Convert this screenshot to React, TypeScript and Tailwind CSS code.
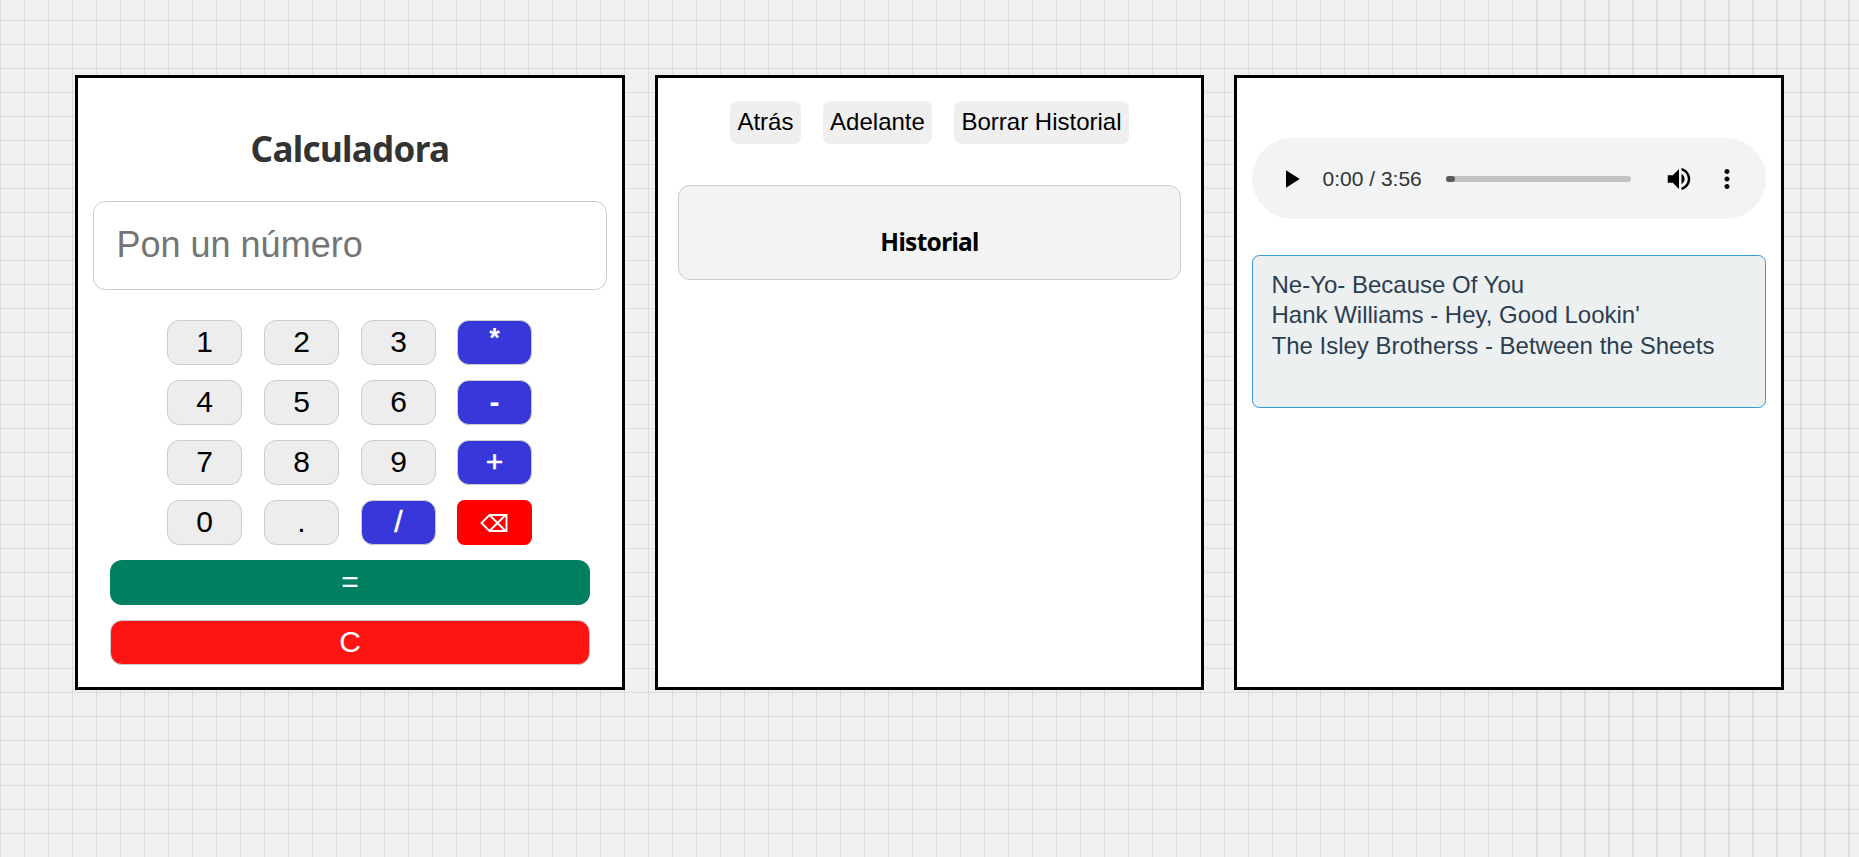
import type { ReactNode } from 'react';

const Card = ({ width, children }: { width: string; children: ReactNode }) => (
  <section className={`h-[615px] shrink-0 border-[3px] border-black bg-white px-[15px] ${width}`}>{children}</section>
);

const digit = 'bg-[#ededed] pb-[2px] border-[#ccc] text-[30px] text-black';
const operator = 'bg-[#3837da] pb-[2px] border-[#ccc] text-[30px] text-white [-webkit-text-stroke:0.5px_white]';
const minus = 'bg-[#3837da] pb-[2px] border-[#ccc] text-[30px] text-white font-bold';
const times = 'bg-[#3837da] pb-[9px] border-[#ccc] text-[27px] text-white font-bold';

const keys: { label: string; style: string }[] = [
  { label: '1', style: digit },
  { label: '2', style: digit },
  { label: '3', style: digit },
  { label: '*', style: times },
  { label: '4', style: digit },
  { label: '5', style: digit },
  { label: '6', style: digit },
  { label: '-', style: minus },
  { label: '7', style: digit },
  { label: '8', style: digit },
  { label: '9', style: digit },
  { label: '+', style: operator },
  { label: '0', style: digit },
  { label: '.', style: digit },
  { label: '/', style: operator },
];

function Calculator() {
  return (
    <Card width="w-[550px]">
      <h1 className="mt-[46px] text-center font-['Noto_Sans',sans-serif] text-[35px] leading-[50px] font-bold tracking-[-0.65px] text-[#333]">
        Calculadora
      </h1>
      <input
        className="mt-[27px] block h-[89px] w-full rounded-[12px] border border-[#ccc] bg-white px-[22.5px] pb-[2px] text-[36px] placeholder:text-[#757575]"
        placeholder="Pon un número"
      />
      <div className="mt-[30px] ml-[74px] grid grid-cols-[97px_97px_96px_75px] gap-y-[15px]">
        {keys.map((k) => (
          <button key={k.label} className={`h-[45px] w-[75px] rounded-[12px] border leading-[34px] ${k.style}`}>
            {k.label}
          </button>
        ))}
        <button className="flex h-[45px] w-[75px] items-center justify-center rounded-[7.5px] bg-[#f00] pr-px" aria-label="Borrar">
          <svg className="mt-px h-[18px] w-[28px]" viewBox="0 0 28 18" fill="none" stroke="#fff" strokeWidth="1.9">
            <path d="M9.5 1H26.5V17H9.5L1.5 9Z M9.5 1L25.5 17 M25.5 1L9.5 17" />
          </svg>
        </button>
      </div>
      <button className="mt-[15px] ml-[17px] block h-[45px] w-[480px] rounded-[12px] bg-[#008060] pb-[2px] text-[30px] leading-[34px] text-white">
        =
      </button>
      <button className="mt-[15px] ml-[17px] block h-[45px] w-[480px] rounded-[12px] border border-[#ccc] bg-[#ff1414] pb-[2px] text-[30px] leading-[34px] text-white">
        C
      </button>
    </Card>
  );
}

function History() {
  return (
    <Card width="w-[549px]">
      <div className="mt-[23px] flex justify-center gap-[21.67px]">
        {['Atrás', 'Adelante', 'Borrar Historial'].map((label) => (
          <button key={label} className="h-[43px] rounded-[7.5px] bg-[#efefef] px-[7.5px] pb-px text-[24px] leading-[28px] text-black">
            {label}
          </button>
        ))}
      </div>
      <div className="mx-[5px] mt-[41px] h-[95px] rounded-[12px] border border-[#ccc] bg-[#f3f3f3]">
        <h2 className="mt-[39px] text-center font-['Noto_Sans',sans-serif] text-[24.5px] leading-[34px] font-bold tracking-[-0.7px] text-black">
          Historial
        </h2>
      </div>
    </Card>
  );
}

const Icon = ({ d }: { d: string }) => (
  <svg className="h-[30px] w-[30px] shrink-0" viewBox="0 0 24 24" fill="#000">
    <path d={d} />
  </svg>
);

function Player() {
  return (
    <Card width="w-[550px]">
      <div className="mt-[60px] flex h-[81px] items-center rounded-[40.5px] bg-[#f1f3f4] pr-[24px] pl-[24px]">
        <Icon d="M8 5v14l11-7z" />
        <span className="ml-[16.5px] w-[123.5px] text-[21px] whitespace-nowrap text-[#333]">0:00 / 3:56</span>
        <div className="h-[6px] flex-1 rounded-[3px] bg-[#c1c2c3]">
          <div className="h-[6px] w-[9px] rounded-[3px] bg-[#5a5a5b]" />
        </div>
        <div className="ml-[33px] flex gap-[18px]">
          <Icon d="M3 9v6h4l5 5V4L7 9H3zm13.5 3c0-1.77-1.02-3.29-2.5-4.03v8.05c1.48-.73 2.5-2.25 2.5-4.02zM14 3.23v2.06c2.89.86 5 3.54 5 6.71s-2.11 5.85-5 6.71v2.06c4.01-.91 7-4.49 7-8.77s-2.99-7.86-7-8.77z" />
          <Icon d="M12 8c1.1 0 2-.9 2-2s-.9-2-2-2-2 .9-2 2 .9 2 2 2zm0 2c-1.1 0-2 .9-2 2s.9 2 2 2 2-.9 2-2-.9-2-2-2zm0 6c-1.1 0-2 .9-2 2s.9 2 2 2 2-.9 2-2-.9-2-2-2z" />
        </div>
      </div>
      <ul className="mt-[36px] h-[153px] rounded-[7.5px] border border-[#3498db] bg-[#ecf0f1] px-[18.5px] pt-[13.75px] text-[24px] leading-[30.5px] text-[#2c3e50]">
        <li>Ne-Yo- Because Of You</li>
        <li>Hank Williams - Hey, Good Lookin'</li>
        <li>The Isley Brotherss - Between the Sheets</li>
      </ul>
    </Card>
  );
}

export default function App() {
  return (
    <main className="h-[857px] bg-[#f0f0f0] bg-[image:repeating-linear-gradient(90deg,rgba(0,0,0,0.08)_0px,rgba(0,0,0,0.08)_1px,transparent_1px,transparent_24px),repeating-linear-gradient(0deg,rgba(0,0,0,0.08)_0px,rgba(0,0,0,0.08)_1px,transparent_1px,transparent_24px),repeating-linear-gradient(90deg,rgba(0,0,0,0.08)_0px,rgba(0,0,0,0.08)_1px,transparent_1px,transparent_24px)] bg-[length:322px_100%,100%_765px,100%_100%] bg-[position:1537px_0px,0px_0px,0px_0px] [background-repeat:no-repeat,repeat,repeat] font-['Liberation_Sans',sans-serif]">
      <div className="flex gap-[30px] p-[75px]">
        <Calculator />
        <History />
        <Player />
      </div>
    </main>
  );
}
